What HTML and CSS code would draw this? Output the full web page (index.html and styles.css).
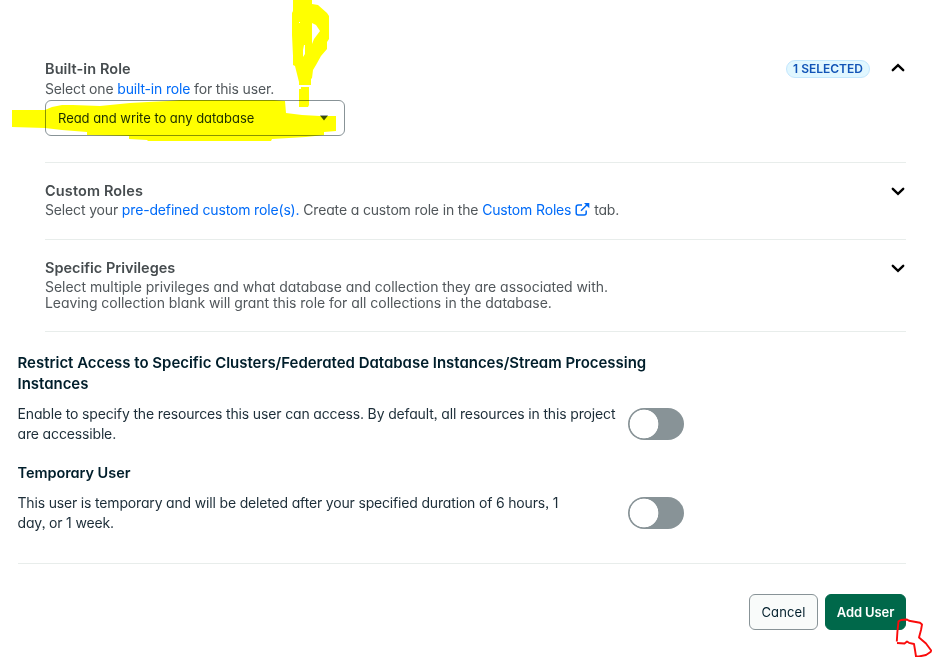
FILE: index.html
```html
<!DOCTYPE html>
<html lang="en">
<head>
<meta charset="utf-8">
<title>Add Database User</title>
<link rel="stylesheet" href="styles.css">
</head>
<body>
<main class="form">
  <div class="roles">
    <section class="role role-first">
      <div class="role-text">
        <h3 class="t-built">Built-in Role</h3>
        <p class="d-built">Select one <a>built-in role</a> for this user.</p>
        <div class="select"><span>Read and write to any database</span><svg width="10" height="6" viewBox="0 0 10 6"><path d="M1 .5h8L5 5.5z" fill="#3d4f58"/></svg></div>
      </div>
      <span class="badge">1 SELECTED</span>
      <svg class="chevron" width="16" height="16" viewBox="0 0 16 16"><path d="M2.8 10.2 8 5.2l5.2 5"/></svg>
    </section>
    <section class="role">
      <div class="role-text">
        <h3 class="t-custom">Custom Roles</h3>
        <p class="d-custom">Select your <a>pre-defined custom role(s).</a> Create a custom role in the <a>Custom Roles<svg class="external" width="15" height="13" viewBox="0 0 15 13"><path d="M7 2H3.2Q1.2 2 1.2 4v6q0 2 2 2h6q2 0 2-2V7.5M6 7.8l6-6" fill="none" stroke="currentColor" stroke-width="1.5"/><path d="M9 0h5.3v5.3z" fill="currentColor"/></svg></a> tab.</p>
      </div>
      <svg class="chevron down" width="16" height="16" viewBox="0 0 16 16"><path d="m2.8 5.8 5.2 5 5.2-5"/></svg>
    </section>
    <section class="role">
      <div class="role-text">
        <h3 class="t-specific">Specific Privileges</h3>
        <p class="d-specific">Select multiple privileges and what database and collection they are associated with.<br>Leaving collection blank will grant this role for all collections in the database.</p>
      </div>
      <svg class="chevron down" width="16" height="16" viewBox="0 0 16 16"><path d="m2.8 5.8 5.2 5 5.2-5"/></svg>
    </section>
  </div>
  <section class="option">
    <h2 class="t-restrict">Restrict Access to Specific Clusters/Federated Database Instances/Stream Processing<br>Instances</h2>
    <div class="option-row">
      <p class="d-restrict">Enable to specify the resources this user can access. By default, all resources in this project<br>are accessible.</p>
      <span class="toggle"></span>
    </div>
  </section>
  <section class="option">
    <h2 class="t-temp">Temporary User</h2>
    <div class="option-row">
      <p class="d-temp">This user is temporary and will be deleted after your specified duration of 6 hours, 1<br>day, or 1 week.</p>
      <span class="toggle"></span>
    </div>
  </section>
  <footer>
    <button class="cancel">Cancel</button>
    <button class="add">Add User</button>
  </footer>
</main>
<svg class="marks highlight" width="932" height="657" viewBox="0 0 932 657">
  <path d="M12 110H45L52 107 62 105H73L100 106 130 103 148 102 168 101 180 100H274L285 101 286 113 302 115 320 116H336V131L324 132V135L306 137 272 139 271 141H148L147 140 129 139V136L87 135V132L62 130 45 128 12 127Z"/>
  <path fill-rule="evenodd" d="M293 0H312V4L318 5 327 13 329 16V39L327 42V49L321 56 316 65 313 70 312 78 311 79V85H299V82L297 74 295 66 293 65V56L292 35V13L293 11ZM312 23 316 25 320 31 314 39 312 44ZM303 50 304 45H305V54L303 57ZM299 22H300V23H299Z"/>
  <path d="M301 87H309V105L308 107H299V89H301Z"/>
</svg>
<svg class="marks scribble" width="932" height="657" viewBox="0 0 932 657"><path d="M896.8 641.5 897.4 632 898.5 621.3 901 620 907 619.5 909 620.8 920 622.7 922 624.5 921 630 919 637.5 926 643.5 931.2 650.5 930.5 652 926 655 919 656.5H916L915 650 914 644 909 642.8 907 641.5 904.5 643.5 897 643"/></svg>
</body>
</html>
```
FILE: styles.css
```css
* { box-sizing: border-box; }
body {
  margin: 0;
  background: #fff;
  font-family: Inter, "Liberation Sans", sans-serif;
  font-feature-settings: "cv11", "ss03";
  font-size: 14px;
  color: #1c2d38;
}
h2, h3, p { margin: 0; white-space: nowrap; }
.form { width: 932px; height: 657px; padding: 41px 26px 0 17.5px; overflow: hidden; }
.roles { margin-left: 27.5px; }
.role { display: flex; align-items: flex-start; padding: 18px 0 20px; border-bottom: 1px solid #e8edeb; }
.role-first { padding-bottom: 26px; }
.role-text { flex: 1; color: #51575b; }
.role h3 { font-size: 14.5px; line-height: 20px; font-weight: 600; color: #464c4f; }
.role p { line-height: 18px; }
.role .d-built { height: 21px; line-height: 19px; letter-spacing: -.16px; }
.role .d-custom { letter-spacing: -.155px; }
.role .d-specific { line-height: 16px; padding-top: 1px; letter-spacing: -.045px; }
.t-built { letter-spacing: .08px; }
.t-custom { letter-spacing: .13px; }
a { color: #016bf8; }
.external { margin: 0 0 -1px 4px; }
.select {
  display: flex; align-items: center; justify-content: space-between;
  width: 300px; height: 36px; padding: 0 15px 0 12px;
  border: 1px solid #889397; border-radius: 6px;
  font-size: 13px; letter-spacing: -.03px; color: #1c2d38;
}
.badge {
  display: flex; align-items: center; justify-content: center;
  width: 84px; height: 18px; margin-top: 1px; padding-bottom: 1px;
  border: 1px solid #c3e7fe; border-radius: 9px;
  background: #e1f7ff; color: #1254b7; font-size: 12px; font-weight: 600;
}
.chevron { margin: 1px 0 0 20px; }
.chevron.down { margin-top: 2px; }
.role > .chevron path { fill: none; stroke: #000; stroke-width: 2.4; stroke-linecap: round; stroke-linejoin: miter; }
.option { padding-top: 20px; }
.option h2 { font-size: 14.5px; line-height: 21px; font-weight: 600; color: #001e2b; margin-bottom: 10px; }
.option .t-restrict { font-size: 15px; letter-spacing: -.02px; }
.option .t-temp { letter-spacing: -.05px; }
.option p { line-height: 20px; }
.d-restrict { letter-spacing: -.15px; }
.d-temp { letter-spacing: -.17px; }
.option-row { display: flex; height: 40px; justify-content: space-between; width: 666.5px; }
.toggle { flex: none; width: 56px; height: 32px; margin-top: 4px; border-radius: 16px; background: radial-gradient(circle at 16px 16px, #fff 14px, #889397 14.7px); }
.option + .option { padding-top: 18px; }
footer { display: flex; justify-content: flex-end; gap: 7px; margin-top: 30px; padding-top: 30px; border-top: 1px solid #e8edeb; }
button { height: 36px; padding: 0; border-radius: 6px; font: 400 13px Inter, sans-serif; font-feature-settings: "cv11"; }
.cancel { width: 69px; border: 1px solid #889397; background: #f9fbfa; color: #001e2b; letter-spacing: .15px; }
.add { width: 81px; border: 1px solid #00684a; background: #00684a; color: #fff; font-weight: 600; letter-spacing: -.1px; }
.marks { position: absolute; left: 0; top: 0; pointer-events: none; }
.highlight { fill: #ff0; mix-blend-mode: multiply; }
.scribble { fill: none; stroke: #fa0b0b; stroke-width: 1.9; stroke-linejoin: round; }
```
